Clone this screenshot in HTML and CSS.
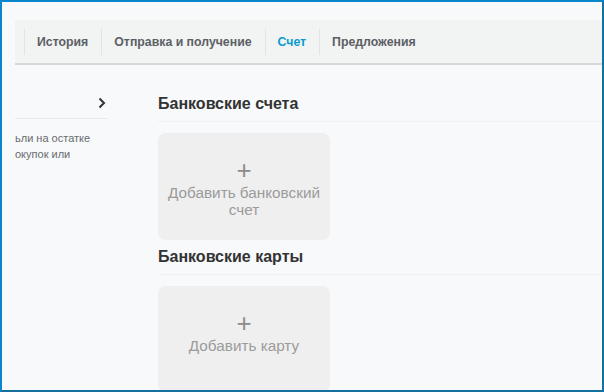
FILE: index.html
```html
<!DOCTYPE html>
<html lang="ru">
<head>
    <meta charset="UTF-8">
    <meta name="viewport" content="width=device-width, initial-scale=1.0">
    <title>Счет</title>
    <link rel="stylesheet" href="styles.css">
</head>
<body>
    <div class="frame">
        <nav class="tabs">
            <a class="tab" href="#">История</a>
            <a class="tab" href="#">Отправка и получение</a>
            <a class="tab active" href="#">Счет</a>
            <a class="tab" href="#">Предложения</a>
        </nav>

        <div class="content">
            <aside class="side">
                <div class="side_head">
                    <svg class="chevron" width="8" height="12" viewBox="0 0 8 12">
                        <polyline points="1.5,1.5 6,6 1.5,10.5" fill="none" stroke="#333" stroke-width="2"/>
                    </svg>
                </div>
                <p class="side_text">ьли на остатке<br>окупок или</p>
            </aside>

            <main class="main">
                <h3 class="section_title">Банковские счета</h3>
                <div class="add_card">
                    <span class="plus">+</span>
                    <span class="add_text">Добавить банковский<br>счет</span>
                </div>

                <h3 class="section_title">Банковские карты</h3>
                <div class="add_card">
                    <span class="plus">+</span>
                    <span class="add_text">Добавить карту</span>
                </div>
            </main>
        </div>
    </div>
</body>
</html>
```

FILE: styles.css
```css
html, body {
    margin: 0;
    height: 100%;
}
body {
    font-family: "Liberation Sans", Arial, sans-serif;
    background-color: #f8f9fb;
}
.frame {
    box-sizing: border-box;
    height: 392px;
    overflow: hidden;
    border: 2px solid #0a86cc;
    border-right-color: #16709f;
    border-bottom-color: #16709f;
    padding: 18px 0 0 13px;
}
.tabs {
    display: flex;
    align-items: center;
    height: 43px;
    padding-left: 9px;
    background-color: #f2f3f3;
    border-bottom: 2px solid #d5d9db;
}
.tab {
    display: block;
    padding: 0 13px 0 12px;
    line-height: 26px;
    border-left: 1px solid #e1e3e4;
    font-size: 12.3px;
    font-weight: bold;
    color: #5b6065;
    text-decoration: none;
}
.tab.active {
    color: #0a9ccd;
}
.content {
    display: flex;
    padding-top: 22px;
}
.side {
    width: 93px;
    margin-right: 50px;
    flex-shrink: 0;
}
.side_head {
    display: flex;
    justify-content: flex-end;
    align-items: center;
    height: 31px;
    padding-right: 2px;
    border-bottom: 1px solid #e8eaeb;
}
.side_text {
    margin: 11px 0 0 0;
    font-size: 11px;
    line-height: 16px;
    color: #676b6e;
    white-space: nowrap;
}
.main {
    flex: 1;
}
.section_title {
    margin: 0;
    height: 34px;
    line-height: 34px;
    font-size: 16px;
    font-weight: bold;
    color: #333;
    border-bottom: 1px solid #eef0f1;
}
.add_card {
    display: flex;
    flex-direction: column;
    align-items: center;
    box-sizing: border-box;
    width: 172px;
    height: 107px;
    margin-top: 11px;
    padding-top: 24px;
    background-color: #efefef;
    border-radius: 8px;
    text-align: center;
}
.plus {
    font-size: 26px;
    font-weight: 300;
    line-height: 27px;
    color: #8c8c8c;
}
.add_text {
    font-size: 15.3px;
    line-height: 17px;
    color: #9b9b9b;
}
```
